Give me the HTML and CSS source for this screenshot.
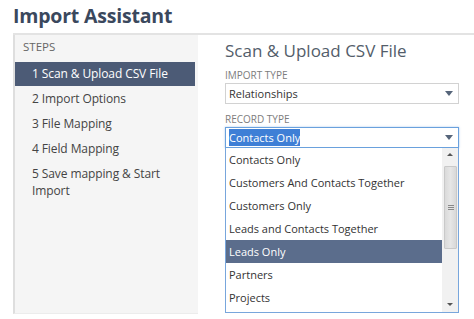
FILE: index.html
```html
<!DOCTYPE html>
<html lang="en">
<head>
<meta charset="utf-8">
<title>Import Assistant</title>
<link rel="stylesheet" href="styles.css">
</head>
<body>
<div class="page">
  <h1 class="title">Import Assistant</h1>
  <div class="wizard">
    <aside class="steps">
      <div class="steps-head">STEPS</div>
      <ul class="step-list">
        <li class="step active">1 Scan &amp; Upload CSV File</li>
        <li class="step">2 Import Options</li>
        <li class="step">3 File Mapping</li>
        <li class="step">4 Field Mapping</li>
        <li class="step">5 Save mapping &amp; Start Import</li>
      </ul>
    </aside>
    <main class="content">
      <h2 class="heading">Scan &amp; Upload CSV File</h2>
      <div class="field">
        <div class="label">IMPORT TYPE</div>
        <div class="select">
          <span class="value">Relationships</span>
          <span class="arrow"></span>
        </div>
      </div>
      <div class="field record">
        <div class="label">RECORD TYPE</div>
        <div class="select focused">
          <span class="value"><span class="hl">Contacts Only</span></span>
          <span class="arrow"></span>
        </div>
        <div class="dropdown">
          <ul class="options">
            <li class="option">Contacts Only</li>
            <li class="option">Customers And Contacts Together</li>
            <li class="option">Customers Only</li>
            <li class="option">Leads and Contacts Together</li>
            <li class="option selected">Leads Only</li>
            <li class="option">Partners</li>
            <li class="option">Projects</li>
          </ul>
          <div class="scrollbar">
            <span class="sb-arrow up"></span>
            <div class="thumb"><span class="grip"></span></div>
            <span class="sb-arrow down"></span>
          </div>
        </div>
      </div>
    </main>
  </div>
</div>
</body>
</html>
```

FILE: styles.css
```css
* { box-sizing: border-box; }

html, body {
  margin: 0;
  padding: 0;
  background: #ffffff;
  font-family: "Open Sans", "Liberation Sans", sans-serif;
  color: #333333;
}

.page {
  padding-left: 13px;
  width: 474px;
  height: 319px;
  overflow: hidden;
}

.title {
  margin: 4px 0 5px 0;
  font-size: 19.5px;
  line-height: 24px;
  font-weight: 700;
  letter-spacing: -0.2px;
  color: #3a485d;
}

.wizard {
  display: flex;
  border-top: 2px solid #e3e3e3;
  height: 281px;
}

.steps {
  width: 185px;
  flex: none;
  background: #f5f5f5;
  border-left: 2px solid #dedede;
  border-bottom: 1px solid #ececec;
}

.steps-head {
  padding: 4px 8px 7px 8px;
  font-size: 11.5px;
  line-height: 16px;
  color: #666666;
}

.step-list {
  list-style: none;
  margin: 0;
  padding: 0;
}

.step {
  margin: 0 3px 1px 0;
  padding: 3px 10px 4px 17px;
  font-size: 12px;
  line-height: 17px;
  letter-spacing: -0.1px;
  color: #444444;
}

.step.active {
  background: #4c5b76;
  color: #ffffff;
}

.content {
  flex: 1;
  padding: 5px 15px 0 27px;
}

.heading {
  margin: 0 0 7px 0;
  font-size: 17px;
  line-height: 22px;
  font-weight: 400;
  color: #535d6a;
}

.field + .field {
  margin-top: 9px;
}

.record {
  position: relative;
}

.label {
  margin-bottom: 1px;
  font-size: 10px;
  line-height: 13px;
  color: #7d7d7d;
}

.select {
  display: flex;
  align-items: center;
  justify-content: space-between;
  height: 21px;
  padding: 0 5px 0 3px;
  border: 1px solid #d2d2d2;
  font-size: 11px;
  line-height: 19px;
  color: #333333;
}

.select.focused {
  border-color: #6aa1dd;
  box-shadow: 0 0 2px rgba(90, 150, 220, 0.5);
}

.hl {
  background: #3e7fd6;
  color: #ffffff;
  padding: 1px 0;
}

.arrow {
  width: 0;
  height: 0;
  border-left: 4.5px solid transparent;
  border-right: 4.5px solid transparent;
  border-top: 5px solid #56657a;
}

.dropdown {
  position: absolute;
  left: 0;
  right: 0;
  top: 100%;
  display: flex;
  background: #ffffff;
  border: 1px solid #78a6dc;
  border-top: none;
  padding-bottom: 3px;
}

.options {
  list-style: none;
  margin: 0;
  padding: 0;
  flex: 1;
}

.option {
  height: 23px;
  padding-left: 3px;
  font-size: 11px;
  line-height: 23px;
  color: #333333;
}

.option.selected {
  background: #5b6d8c;
  color: #ffffff;
}

.scrollbar {
  width: 16px;
  flex: none;
  background: #f1f1f1;
  display: flex;
  flex-direction: column;
  align-items: center;
  padding: 5px 0 6px 0;
  margin-bottom: -3px;
}

.sb-arrow {
  width: 0;
  height: 0;
  border-left: 3px solid transparent;
  border-right: 3px solid transparent;
}

.sb-arrow.up {
  border-bottom: 3px solid #555555;
}

.sb-arrow.down {
  border-top: 3px solid #555555;
  margin-top: auto;
}

.thumb {
  width: 13px;
  height: 83px;
  margin: 10px 0 0 1px;
  background: linear-gradient(to right, #dadada, #e6e6e6 50%, #d8d8d8);
  border: 1px solid #c9c9c9;
  border-radius: 1px;
  display: flex;
  align-items: center;
  justify-content: center;
}

.grip {
  width: 6px;
  height: 5px;
  border-top: 1px solid #888888;
  border-bottom: 1px solid #888888;
  position: relative;
}

.grip::after {
  content: "";
  position: absolute;
  left: 0;
  right: 0;
  top: 1px;
  border-top: 1px solid #888888;
}
```
